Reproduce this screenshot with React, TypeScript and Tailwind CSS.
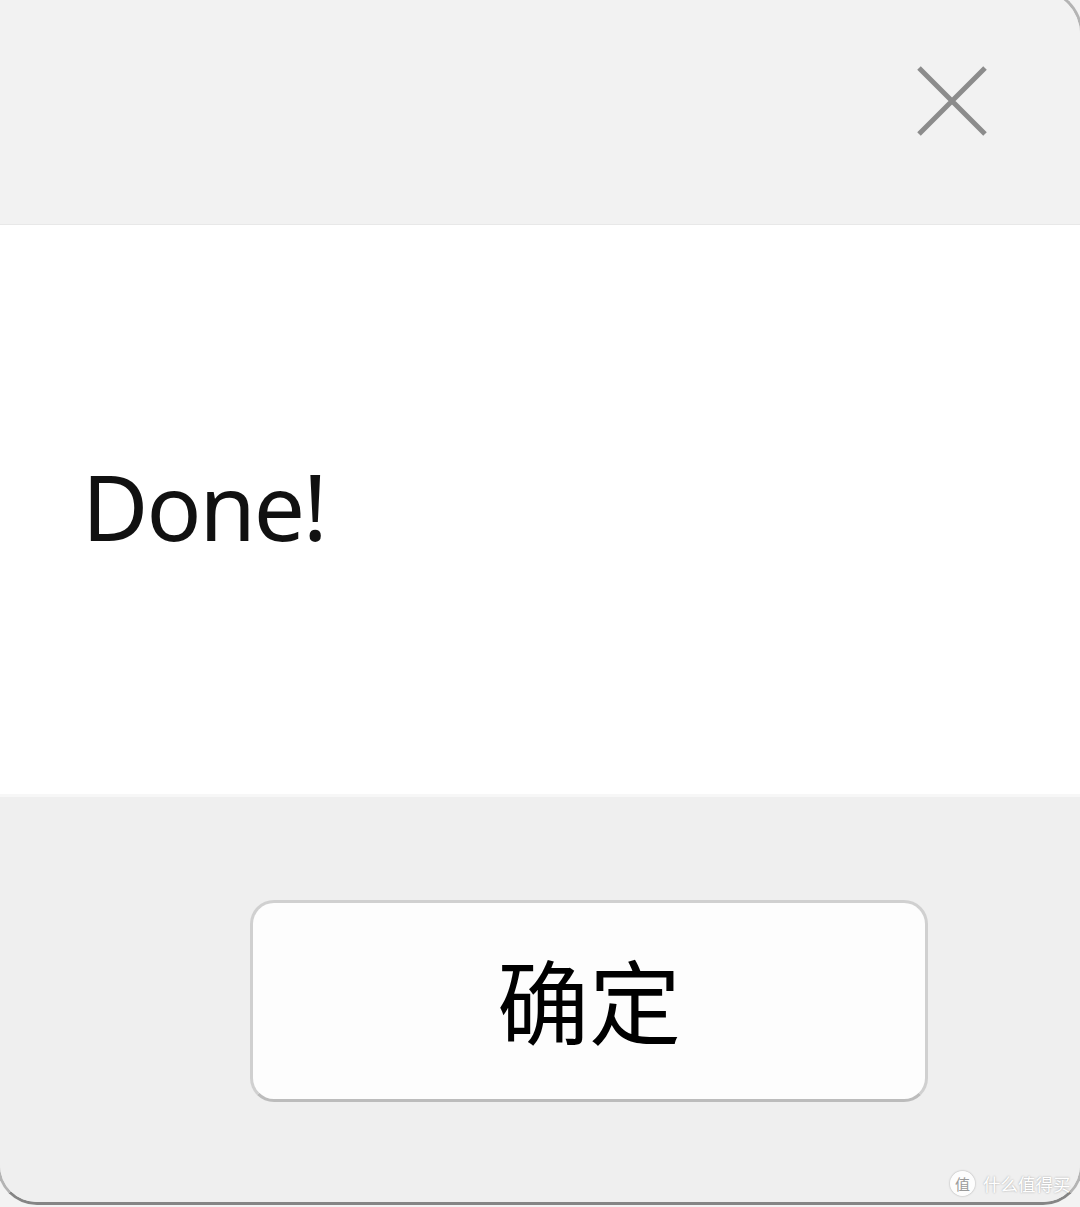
import React from 'react';

// Close glyph for the title bar: two thin diagonal strokes
function CloseIcon() {
  return (
    <svg width="72" height="72" viewBox="0 0 72 72" fill="none">
      <path d="M3 3 L69 69 M69 3 L3 69" stroke="#8c8c8c" strokeWidth="5" />
    </svg>
  );
}

// Site watermark in the corner: circled 值 plus the name
function Watermark() {
  return (
    <div className="absolute left-[950px] top-[1171px] flex items-center gap-[8px] text-white [text-shadow:0_0_2px_rgba(0,0,0,0.35)]">
      <div className="w-[25px] h-[25px] rounded-full bg-white/90 flex items-center justify-center shadow-[0_0_2px_rgba(0,0,0,0.35)]">
        <span className="text-[15px] leading-none text-[#9a9a9a] [text-shadow:none] font-['Noto_Sans_CJK_SC',sans-serif]">值</span>
      </div>
      <span className="text-[17.5px] leading-none font-['Noto_Sans_CJK_SC',sans-serif]">什么值得买</span>
    </div>
  );
}

export default function App() {
  return (
    <div className="relative w-[1080px] h-[1207px] overflow-hidden bg-[#f3f3f3]">
      <div className="-mt-[12px] -ml-[3px] w-[1086px] h-[1217px] flex flex-col border-[3px] border-[#b4b4b4] border-b-[#858585] rounded-tr-[46px] rounded-br-[40px] rounded-bl-[40px] overflow-hidden">
        {/* title bar */}
        <div className="h-[234px] shrink-0 bg-[#f2f2f2] border-b border-[#e8e8e8] flex justify-end pt-[74px] pr-[92px]">
          <CloseIcon />
        </div>

        {/* message */}
        <div className="h-[569px] shrink-0 bg-white flex items-center pl-[82px]">
          <p className="text-[91px] leading-none text-[#111] font-['Noto_Sans',sans-serif] tracking-[-2px] -mt-[6px]">
            Done!
          </p>
        </div>

        {/* buttons */}
        <div className="flex-1 bg-[#efefef] border-t-[3px] border-[#f7f7f7] flex justify-end items-center pr-[152px] pt-[3px]">
          <button className="w-[678px] h-[202px] rounded-[24px] bg-[#fdfdfd] border-[3px] border-[#d0d0d0] border-b-[#bcbcbc] flex items-center justify-center">
            <span className="text-[92px] leading-none text-black font-['Noto_Sans_CJK_SC',sans-serif] -mt-[6px]">
              确定
            </span>
          </button>
        </div>
      </div>
      <Watermark />
    </div>
  );
}
